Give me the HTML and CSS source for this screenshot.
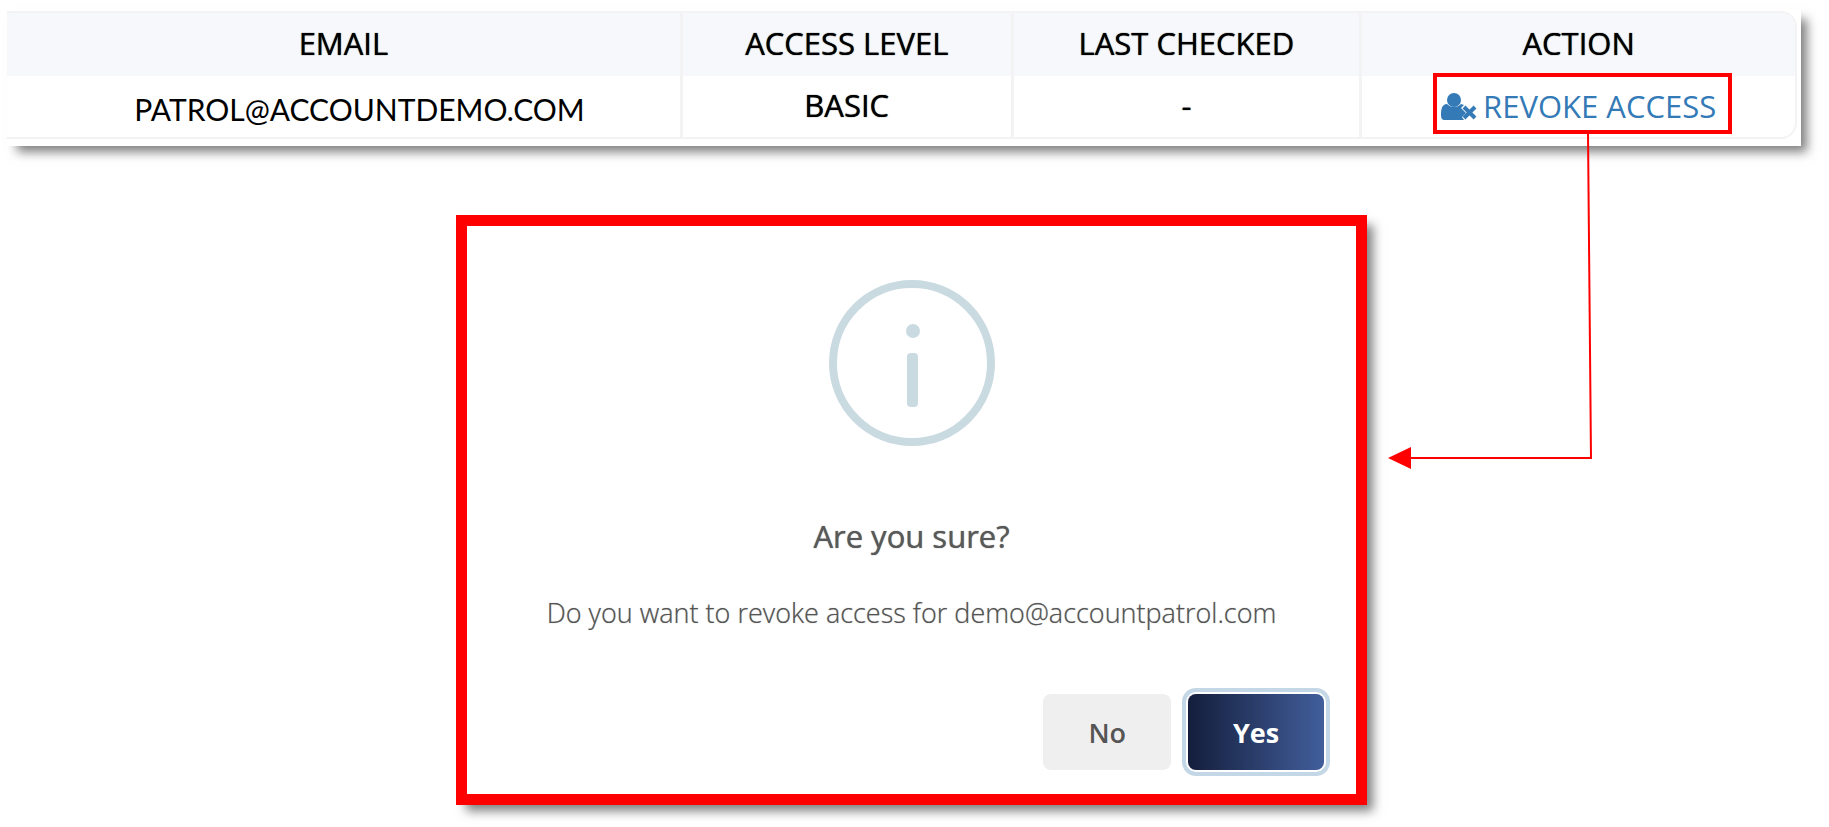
FILE: index.html
```html
<!DOCTYPE html>
<html lang="en">
<head>
  <meta charset="UTF-8">
  <meta name="viewport" content="width=device-width, initial-scale=1.0">
  <title>Revoke Access</title>
  <link rel="stylesheet" href="styles.css">
</head>
<body>
  <main>
    <section class="card">
      <table class="accounts">
        <thead>
          <tr>
            <th class="col-email">Email</th>
            <th class="col-level">Access Level</th>
            <th class="col-checked">Last Checked</th>
            <th class="col-action">Action</th>
          </tr>
        </thead>
        <tbody>
          <tr>
            <td class="email">patrol@accountdemo.com</td>
            <td>Basic</td>
            <td>-</td>
            <td>
              <div class="callout">
                <a href="#confirm" class="revoke">
                  <svg class="user-icon" viewBox="0 0 36 27" aria-hidden="true">
                    <circle cx="13" cy="7" r="7"/>
                    <path d="M6 11c2 2 4 3 7 3s5-1 7-3c1 0 2 1 3 1l-3 3 5 5-4 4 2 3H4c-3 0-4-2-4-5 0-6 1-11 6-11z"/>
                    <path d="M23 14l11 11M34 14l-11 11" class="cross"/>
                  </svg>
                  Revoke Access
                </a>
                <svg class="connector" viewBox="0 0 206 336" aria-hidden="true">
                  <path d="M200 0L203 325H22" class="line"/>
                  <path d="M0 325L23 314V336z" class="head"/>
                </svg>
              </div>
            </td>
          </tr>
        </tbody>
      </table>
    </section>

    <section class="dialog" id="confirm" role="dialog" aria-labelledby="dialog-title">
      <svg class="info-icon" viewBox="0 0 166 166" aria-hidden="true">
        <circle cx="83" cy="83" r="79" class="ring"/>
        <circle cx="84" cy="51" r="7"/>
        <rect x="78" y="73" width="11" height="54" rx="4"/>
      </svg>
      <h2 id="dialog-title">Are you sure?</h2>
      <p>Do you want to revoke access for demo@accountpatrol.com</p>
      <div class="buttons">
        <button type="button" class="btn-no">No</button>
        <button type="button" class="btn-yes">Yes</button>
      </div>
    </section>
  </main>
</body>
</html>
```
FILE: styles.css
```css
* {
  box-sizing: border-box;
}
body {
  margin: 0;
  background: #fff;
  font-family: "Open Sans", "Noto Sans", sans-serif;
  color: #000;
}
main {
  padding: 9px 6px 20px 0;
}
.card {
  margin: 0 22px 0 7px;
  padding: 2px 4px 7px 0;
  background: #fff;
  box-shadow: 8px 8px 10px -2px rgba(0, 0, 0, 0.5);
}

/* accounts table */
.accounts {
  width: 100%;
  table-layout: fixed;
  border-collapse: separate;
  border-spacing: 0;
  border: 2px solid #f3f3f3;
  border-left: none;
  border-radius: 0 16px 16px 0;
  text-transform: uppercase;
  font-size: 31px;
  line-height: 40px;
}
th, td {
  padding: 0;
  text-align: center;
  font-weight: 400;
  text-shadow: 0 0 1px #000;
  border-right: 3px solid #f3f3f3;
}
th {
  height: 63px;
  padding-bottom: 4px;
  background: #f7f8fc;
}
td {
  height: 61px;
  padding-bottom: 4px;
}
th:last-child, td:last-child {
  border-right: none;
}
th:last-child {
  border-radius: 0 14px 0 0;
}
.col-email {
  width: 37.8%;
}
.col-level {
  width: 18.5%;
}
.col-checked {
  width: 19.5%;
}
.col-action {
  width: 24.2%;
}
.email {
  padding: 4px 0 0 32px;
  font-family: Lato, "Open Sans", sans-serif;
  font-size: 30px;
  text-shadow: none;
}

/* revoke link with its red frame and arrow */
.callout {
  position: relative;
  display: inline-block;
  vertical-align: middle;
  text-shadow: none;
}
.callout::before {
  content: "";
  position: absolute;
  inset: -13px -16px -8px -8px;
  border: 4px solid #f00;
  pointer-events: none;
}
.revoke {
  display: flex;
  align-items: center;
  gap: 6px;
  color: #337ab7;
  text-decoration: none;
  white-space: nowrap;
}
.user-icon {
  width: 36px;
  height: 27px;
  fill: #337ab7;
}
.user-icon .cross {
  stroke: #337ab7;
  stroke-width: 4;
}
.connector {
  position: absolute;
  top: 47px;
  left: -53px;
  width: 206px;
  height: 336px;
}
.connector .line {
  fill: none;
  stroke: #f00;
  stroke-width: 2;
}
.connector .head {
  fill: #f00;
}

/* confirm dialog */
.dialog {
  width: 50%;
  margin: 69px auto 0;
  padding: 54px 32px 24px;
  border: 11px solid #f00;
  background: #fff;
  box-shadow: 8px 8px 10px -2px rgba(0, 0, 0, 0.5);
  text-align: center;
}
.info-icon {
  display: block;
  width: 166px;
  height: 166px;
  margin: 0 auto;
  fill: #c9dae1;
}
.info-icon .ring {
  fill: none;
  stroke: #c9dae1;
  stroke-width: 8;
}
.dialog h2 {
  margin: 70px 0 0;
  font-size: 31px;
  line-height: 40px;
  font-weight: 400;
  color: #595959;
  text-shadow: 0 0 1px #595959;
}
.dialog p {
  margin: 37px 0 0;
  font-size: 27px;
  line-height: 40px;
  font-weight: 300;
  color: #545454;
  text-shadow: 0 0 1px #999;
}
.buttons {
  display: flex;
  justify-content: flex-end;
  gap: 17px;
  margin-top: 61px;
}
.buttons button {
  height: 76px;
  padding: 0 45px;
  border: none;
  border-radius: 8px;
  font-family: inherit;
  font-size: 27px;
  font-weight: 600;
  cursor: pointer;
}
.btn-no {
  background: #efefef;
  color: #555;
}
.buttons .btn-yes {
  background: linear-gradient(to right, #141e3c, #415e9b);
  color: #fff;
  font-weight: 700;
  box-shadow: 0 0 0 2px #fff, 0 0 0 6px #c3d7e7;
}
```
